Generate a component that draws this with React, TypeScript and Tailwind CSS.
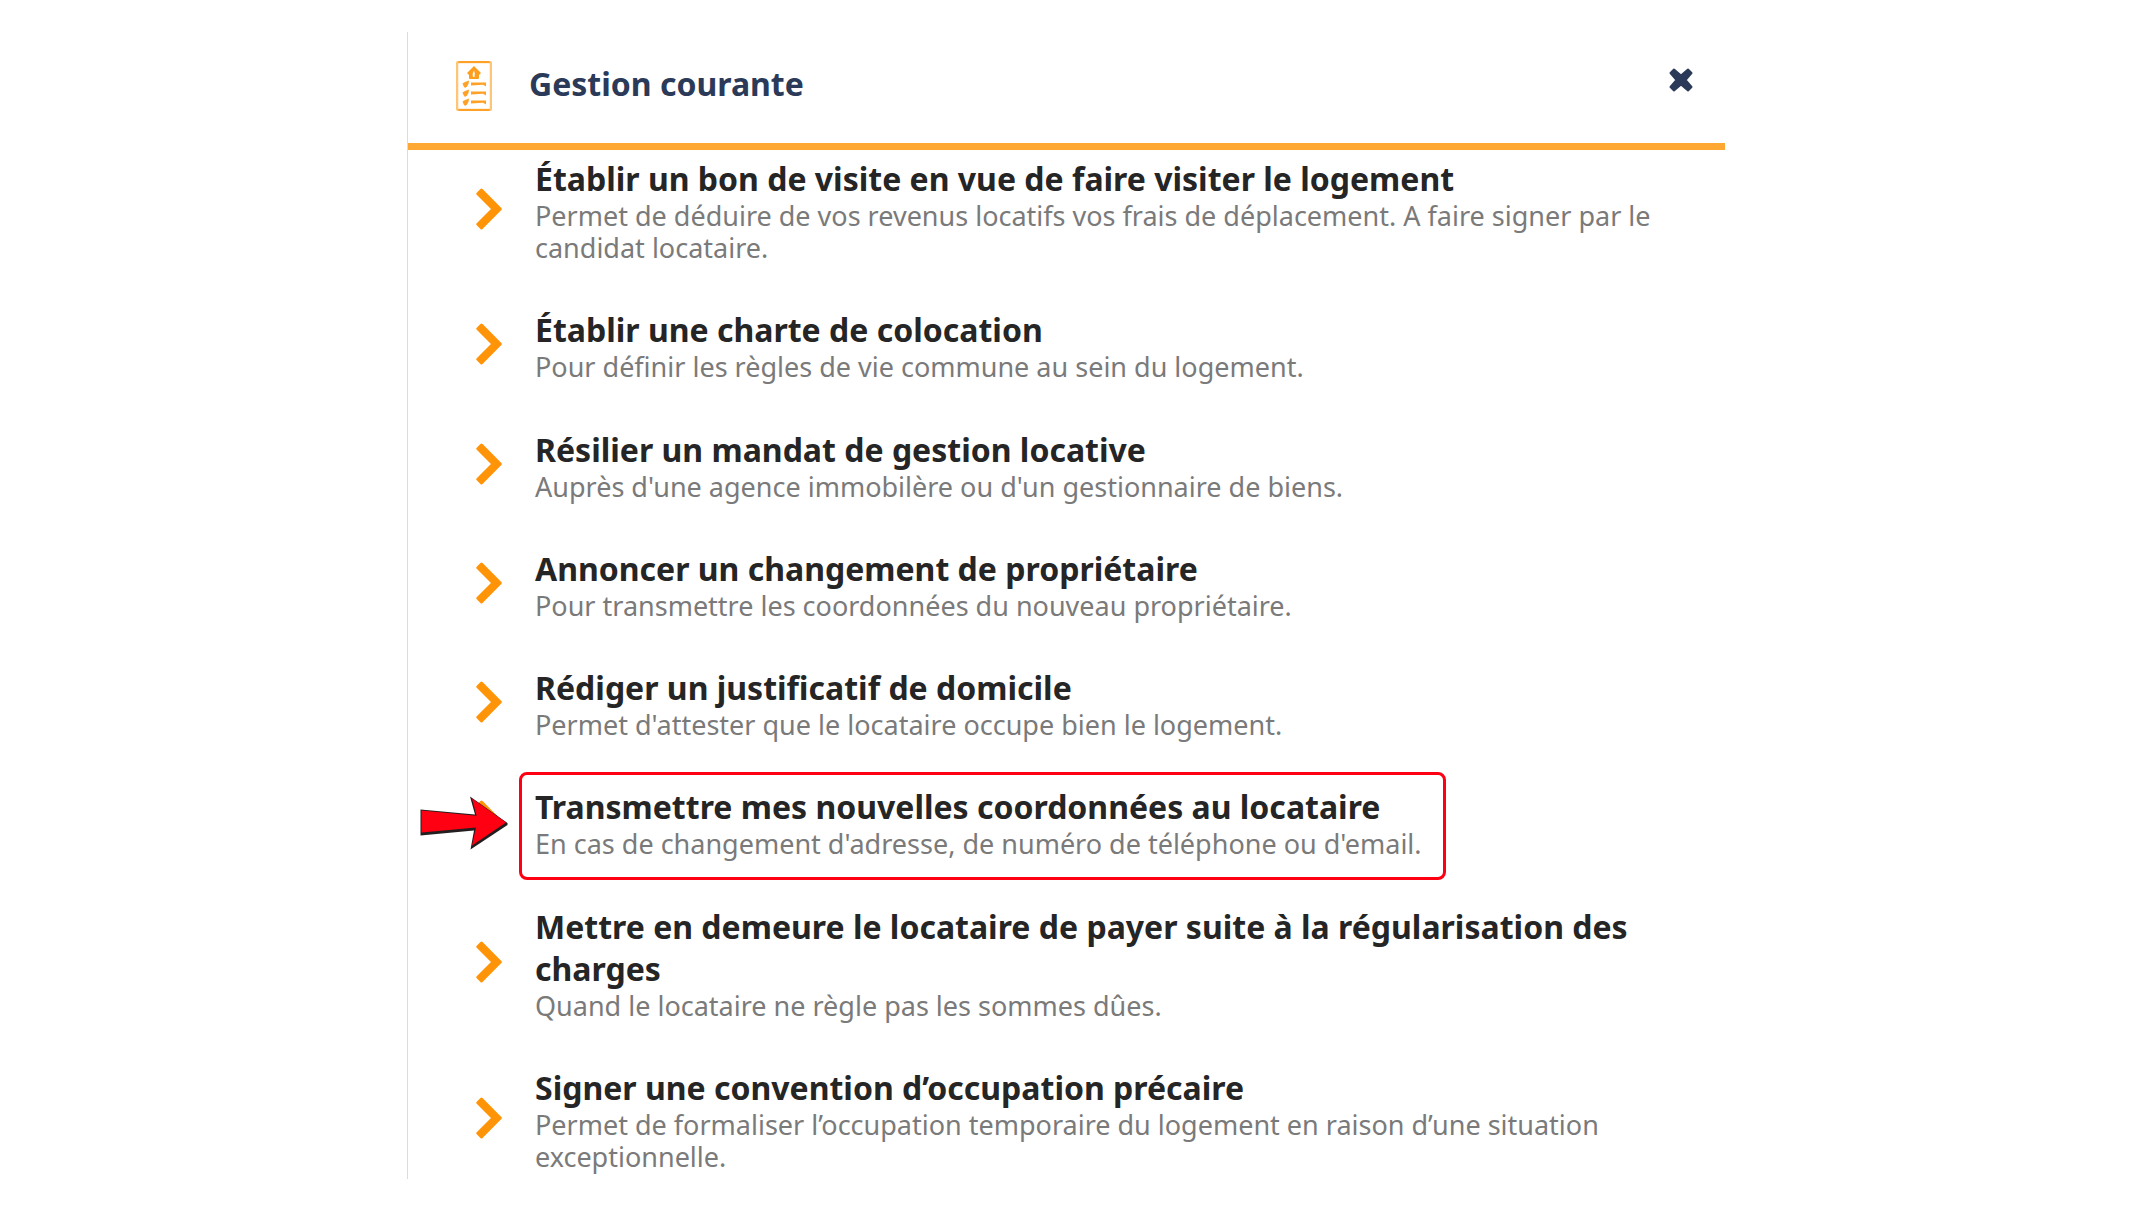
type Item = { title: string; text: string; highlighted?: boolean };

const items: Item[] = [
  {
    title: "Établir un bon de visite en vue de faire visiter le logement",
    text: "Permet de déduire de vos revenus locatifs vos frais de déplacement. A faire signer par le candidat locataire.",
  },
  {
    title: "Établir une charte de colocation",
    text: "Pour définir les règles de vie commune au sein du logement.",
  },
  {
    title: "Résilier un mandat de gestion locative",
    text: "Auprès d'une agence immobilère ou d'un gestionnaire de biens.",
  },
  {
    title: "Annoncer un changement de propriétaire",
    text: "Pour transmettre les coordonnées du nouveau propriétaire.",
  },
  {
    title: "Rédiger un justificatif de domicile",
    text: "Permet d'attester que le locataire occupe bien le logement.",
  },
  {
    title: "Transmettre mes nouvelles coordonnées au locataire",
    text: "En cas de changement d'adresse, de numéro de téléphone ou d'email.",
    highlighted: true,
  },
  {
    title: "Mettre en demeure le locataire de payer suite à la régularisation des charges",
    text: "Quand le locataire ne règle pas les sommes dûes.",
  },
  {
    title: "Signer une convention d’occupation précaire",
    text: "Permet de formaliser l’occupation temporaire du logement en raison d’une situation exceptionnelle.",
  },
];

function ChecklistIcon() {
  return (
    <svg aria-hidden="true" viewBox="0 0 36 50" className="h-[50px] w-9 shrink-0" fill="none">
      <rect x="1" y="1" width="34" height="48" rx="2" stroke="#ffc577" strokeWidth="2.500" />
      <path d="M2.500 1h31M2.500 49h31" stroke="#ffa126" strokeWidth="2" />
      <path
        fillRule="evenodd"
        fill="#ff9d1c"
        d="M18 5 25 12l-2 2V17q0 1-1 1h-8q-1 0-1-1v-3l-2-2zM18 9.500q-2 3-1 6.500h1.500Q19.500 12 18 9.500z"
      />
      {[23, 32, 41].map((y) => (
        <g key={y}>
          <path d={`M6.500 ${y - 0.5}l2.500-1.500 4-1.500-.5 3.500-1.500 2.500-2 1.500-1.500-2z`} fill="#ffa126" />
          <path d={`M15 ${y - 1.5}h15v4l-3-1.800-12 .8z`} fill="#ffa126" />
        </g>
      ))}
    </svg>
  );
}

function Chevron() {
  return (
    <svg aria-hidden="true" viewBox="0 0 26 42" className="mb-1 h-[42px] w-[26px] shrink-0">
      <path
        d="M1.800 5.700 5.500 2 24.300 21 5.500 40 1.800 36.300 17 21z"
        fill="#ff9408"
        stroke="#ff9408"
        strokeWidth="3"
        strokeLinejoin="round"
      />
    </svg>
  );
}

function CloseIcon() {
  return (
    <svg aria-hidden="true" viewBox="0 0 24 24" className="size-6">
      <path
        d="M5 1.500 12 7.500l7-6L22.500 5l-6 7 6 7-3.500 3.500-7-6-7 6L1.500 19l6-7-6-7z"
        fill="#2b3a58"
        stroke="#2b3a58"
        strokeWidth="2"
        strokeLinejoin="round"
      />
    </svg>
  );
}

function RedArrow() {
  return (
    <svg
      aria-hidden="true"
      viewBox="0 0 88 54"
      className="absolute top-1/2 left-3 h-[54px] w-[88px] -translate-y-1/2"
    >
      <path d="M.5 13.500 55 18.500 50 .5 87.500 27v2L50.500 53.500l3.500-19L.5 39.500z" fill="#231f20" />
      <path d="M1.500 14.500 56.500 19.700 52 2.500 86 26.500 52 49.500 56 31.500 1.500 36.500z" fill="#ff0012" />
    </svg>
  );
}

function Row({ item }: { item: Item }) {
  return (
    <li className="relative">
      <a href="#" className="flex items-center gap-[33px] pr-10 pl-[68px]">
        <Chevron />
        <span className="relative block">
          <span className="block text-[32px] leading-[42px] font-bold text-[#252525]">{item.title}</span>
          <span className="block text-[27px] leading-8 text-[#7a7a7a]">{item.text}</span>
          {item.highlighted && (
            <span className="absolute -top-3.5 -right-6 -bottom-5 -left-4 rounded-lg border-3 border-[#ff0012]" />
          )}
        </span>
      </a>
      {item.highlighted && <RedArrow />}
    </li>
  );
}

export default function App() {
  return (
    <div className="flex min-h-screen bg-white pt-8 pr-1 pb-9 font-['Noto_Sans',sans-serif]">
      <section className="mx-auto flex w-full max-w-[1318px] flex-col border-l border-[#dcdcdc]">
        <header className="flex h-[118px] items-center border-b-7 border-[#ffa733] pr-8 pb-1 pl-12">
          <ChecklistIcon />
          <h1 className="mb-1 ml-[37px] flex-1 text-[32px] leading-10 font-bold text-[#2b3a58]">Gestion courante</h1>
          <button type="button" aria-label="Fermer" className="mb-3 cursor-pointer">
            <CloseIcon />
          </button>
        </header>
        <ul className="flex flex-1 flex-col justify-between pt-2 pb-1.5">
          {items.map((item) => (
            <Row key={item.title} item={item} />
          ))}
        </ul>
      </section>
    </div>
  );
}
